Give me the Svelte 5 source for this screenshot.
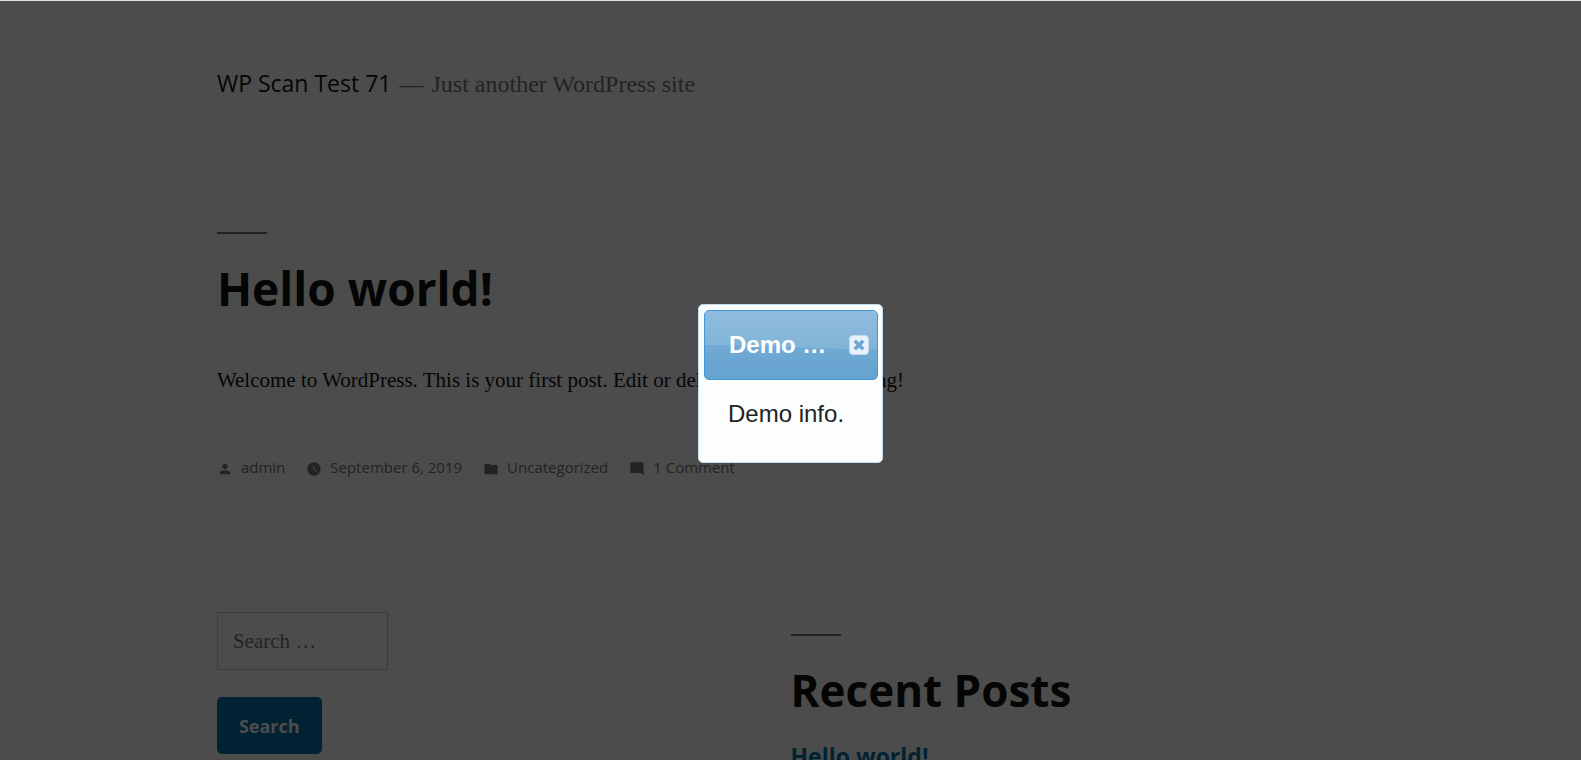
<script>
  let open = $state(true);
  let query = $state('');
</script>

<div class="page">
  <header class="masthead">
    <a class="name" href="#home">WP Scan Test 71</a>
    <span class="dash">—</span>
    <span class="tagline">Just another WordPress site</span>
  </header>

  <main>
    <article>
      <h1>Hello world!</h1>
      <p>Welcome to WordPress. This is your first post. Edit or delete it, then start writing!</p>
      <footer class="meta">
        <a href="#admin">
          <svg viewBox="0 0 24 24"><path d="M12 12c2.21 0 4-1.79 4-4s-1.79-4-4-4-4 1.790-4 4 1.790 4 4 4zm0 2c-2.670 0-8 1.340-8 4v2h16v-2c0-2.660-5.330-4-8-4z" /></svg>
          admin</a>
        <a href="#date">
          <svg viewBox="0 0 24 24"><path fill-rule="evenodd" d="M12 2C6.500 2 2 6.500 2 12s4.500 10 10 10 10-4.500 10-10S17.500 2 12 2zm4.200 14.200L11 13V7h1.500v5.200l4.500 2.700-.8 1.300z" /></svg>
          September 6, 2019</a>
        <a href="#category">
          <svg viewBox="0 0 24 24"><path d="M10 4H4c-1.100 0-1.990.9-1.990 2L2 18c0 1.100.9 2 2 2h16c1.100 0 2-.9 2-2V8c0-1.100-.9-2-2-2h-8l-2-2z" /></svg>
          Uncategorized</a>
        <a href="#comments">
          <svg viewBox="0 0 24 24"><path d="M21.990 4c0-1.100-.89-2-1.990-2H4c-1.100 0-2 .9-2 2v12c0 1.100.9 2 2 2h14l4 4-.01-18z" /></svg>
          1 Comment</a>
      </footer>
    </article>
  </main>

  <aside class="widgets">
    <form onsubmit={(e) => e.preventDefault()}>
      <input type="search" aria-label="Search for:" placeholder="Search …" bind:value={query} />
      <button class="submit">Search</button>
    </form>
    <section>
      <h2>Recent Posts</h2>
      <a class="post" href="#hello">Hello world!</a>
    </section>
  </aside>
</div>

{#if open}
  <div class="overlay">
    <div class="dialog" role="dialog" aria-labelledby="dialog-title">
      <div class="titlebar">
        <svg class="gloss" viewBox="0 0 100 70" preserveAspectRatio="none"><path d="M0 35C35 34 65 40 100 39V0H0z" /></svg>
        <span id="dialog-title">Demo …</span>
        <button class="close" aria-label="Close" onclick={() => (open = false)}>
          <svg viewBox="0 0 10 10"><path d="M2 2l6 6M8 2l-6 6" /></svg>
        </button>
      </div>
      <div class="content">Demo info.</div>
    </div>
  </div>
{/if}

<style>
  :global(body) {
    background: #fff;
    color: #111;
    font-family: "Liberation Serif", serif;
    font-size: 21px;
    height: 100vh;
    overflow: hidden;
  }
  .page {
    padding: 0 13.72%;
    border-top: 1px solid #dfe1e1;
  }
  a {
    color: inherit;
    text-decoration: none;
  }
  .masthead {
    display: flex;
    align-items: baseline;
    gap: 8px;
    padding-top: 64px;
    line-height: 36px;
    color: #767676;
    font-size: 24px;
  }
  .name {
    color: #111;
    font-family: "Open Sans", sans-serif;
    font-size: 23px;
  }
  main {
    padding-top: 130px;
  }
  h1,
  h2 {
    margin: 0;
    font-family: "Open Sans", sans-serif;
    font-size: 46px;
    line-height: 60px;
  }
  h2 {
    font-size: 44px;
  }
  h1::before,
  h2::before {
    content: "";
    display: block;
    width: 50px;
    height: 2px;
    margin-bottom: 24px;
    background: #767676;
  }
  p {
    margin: 42px 0 0;
    line-height: 40px;
  }
  .meta {
    display: flex;
    gap: 21px;
    padding-top: 55px;
    color: #767676;
    font: 15px/24px "Open Sans", sans-serif;
  }
  .meta a {
    display: flex;
    align-items: center;
    gap: 8px;
  }
  .meta svg {
    width: 16px;
    height: 16px;
    margin-top: 4px;
    fill: currentColor;
  }
  .widgets {
    display: grid;
    grid-template-columns: 1fr 1fr;
    padding-top: 133px;
  }
  form {
    display: flex;
    flex-direction: column;
    align-items: flex-start;
    gap: 27px;
  }
  input {
    box-sizing: border-box;
    width: 171px;
    height: 58px;
    padding: 0 15px;
    border: 1px solid #ccc;
    border-radius: 0;
    background: #fff;
    font: 21px "Liberation Serif", serif;
    appearance: none;
  }
  input::placeholder {
    color: #767676;
  }
  .submit {
    height: 57px;
    padding: 0 22px;
    border: 0;
    border-radius: 5px;
    background: #0073aa;
    color: #fff;
    font: bold 18px "Open Sans", sans-serif;
  }
  section {
    padding-top: 22px;
  }
  .post {
    display: block;
    padding-top: 20px;
    color: #0073aa;
    font: bold 23px/32px "Open Sans", sans-serif;
  }
  .overlay {
    position: fixed;
    inset: 1px 0 0;
    display: flex;
    align-items: center;
    justify-content: center;
    padding-top: 6px;
    background: rgba(0, 0, 0, 0.7);
    font-family: "Liberation Sans", Arial, sans-serif;
    font-size: 24px;
  }
  .dialog {
    box-sizing: border-box;
    width: 185px;
    padding: 5px 4px 5px 5px;
    border: 1px solid #c5dbec;
    border-radius: 5px;
    background: #fcfdfd;
    color: #222;
  }
  .titlebar {
    position: relative;
    display: flex;
    align-items: center;
    justify-content: space-between;
    height: 68px;
    padding: 0 8px 0 24px;
    border: 1px solid #4297d7;
    border-radius: 5px;
    background: linear-gradient(#7eb2d9, #64a2cf);
    color: #fff;
    font-weight: bold;
  }
  .gloss {
    position: absolute;
    inset: 0;
    width: 100%;
    height: 100%;
    fill: #fff;
    opacity: 0.13;
  }
  .titlebar span,
  .close {
    position: relative;
  }
  .close {
    display: grid;
    place-items: center;
    width: 20px;
    height: 20px;
    padding: 0;
    border: 1px solid #c5dbec;
    border-radius: 4px;
    background: #e9f2fa;
  }
  .close svg {
    width: 14px;
    height: 14px;
    stroke: #6ba7d4;
    stroke-width: 2.5;
  }
  .content {
    padding: 15px 24px 24px;
    line-height: 38px;
  }
</style>
